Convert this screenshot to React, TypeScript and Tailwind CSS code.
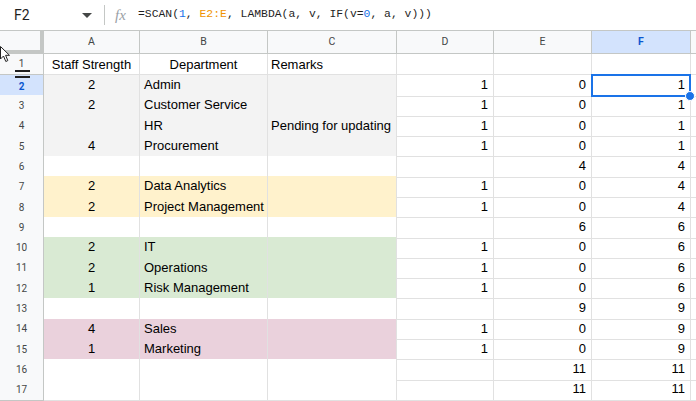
import React from "react";

type Fill = "none" | "gray" | "yellow" | "green" | "pink";

const fills: Record<Fill, string> = {
  none: "bg-white",
  gray: "bg-[#f3f3f3]",
  yellow: "bg-[#fff2cc]",
  green: "bg-[#d9ead3]",
  pink: "bg-[#ead1dc]",
};

const rows: { a: string; b: string; c: string; d: string; e: string; f: string; fill: Fill }[] = [
  { a: "Staff Strength", b: "Department", c: "Remarks", d: "", e: "", f: "", fill: "none" },
  { a: "2", b: "Admin", c: "", d: "1", e: "0", f: "1", fill: "gray" },
  { a: "2", b: "Customer Service", c: "", d: "1", e: "0", f: "1", fill: "gray" },
  { a: "", b: "HR", c: "Pending for updating", d: "1", e: "0", f: "1", fill: "gray" },
  { a: "4", b: "Procurement", c: "", d: "1", e: "0", f: "1", fill: "gray" },
  { a: "", b: "", c: "", d: "", e: "4", f: "4", fill: "none" },
  { a: "2", b: "Data Analytics", c: "", d: "1", e: "0", f: "4", fill: "yellow" },
  { a: "2", b: "Project Management", c: "", d: "1", e: "0", f: "4", fill: "yellow" },
  { a: "", b: "", c: "", d: "", e: "6", f: "6", fill: "none" },
  { a: "2", b: "IT", c: "", d: "1", e: "0", f: "6", fill: "green" },
  { a: "2", b: "Operations", c: "", d: "1", e: "0", f: "6", fill: "green" },
  { a: "1", b: "Risk Management", c: "", d: "1", e: "0", f: "6", fill: "green" },
  { a: "", b: "", c: "", d: "", e: "9", f: "9", fill: "none" },
  { a: "4", b: "Sales", c: "", d: "1", e: "0", f: "9", fill: "pink" },
  { a: "1", b: "Marketing", c: "", d: "1", e: "0", f: "9", fill: "pink" },
  { a: "", b: "", c: "", d: "", e: "11", f: "11", fill: "none" },
  { a: "", b: "", c: "", d: "", e: "11", f: "11", fill: "none" },
];

const cols = "grid grid-cols-[44px_96px_128px_129px_97px_98px_99px_5px]";

const FormulaBar = () => (
  <div className="flex items-center h-[31px] bg-white border-b border-[#c4c7c5] font-['Roboto','Liberation_Sans',sans-serif]">
    <div className="w-[104px] flex items-center justify-between pl-[14px] pr-[12px] text-[14px] text-[#1f1f1f]">
      <span>F2</span>
      <span className="w-0 h-0 border-l-[5px] border-r-[5px] border-t-[5px] border-l-transparent border-r-transparent border-t-[#444746]" />
    </div>
    <div className="w-px h-[20px] bg-[#c4c7c5]" />
    <span className="ml-[10px] w-[23px] text-[15px] italic text-[#9aa0a6] font-['Liberation_Serif',serif]">fx</span>
    <span className="text-[11.4px] text-[#1f1f1f] font-['Liberation_Mono',monospace] whitespace-pre">
      =SCAN(<span className="text-[#1a73e8]">1</span>, <span className="text-[#f09300]">E2:E</span>, LAMBDA(a, v, IF(v=<span className="text-[#1a73e8]">0</span>, a, v)))
    </span>
  </div>
);

const ColHeader = () => (
  <div className={`${cols} h-[23px] text-[10.5px] text-[#444746] font-['Roboto','Liberation_Sans',sans-serif]`}>
    <div className="bg-[#f8f9fa] border-r-[4px] border-b-[4px] border-[#c4c7c5]" />
    {["A", "B", "C", "D", "E"].map((l) => (
      <div key={l} className="bg-[#f8f9fa] border-r border-b border-[#c4c7c5] flex items-center justify-center">
        {l}
      </div>
    ))}
    <div className="bg-[#d3e3fd] border-r border-b border-[#c4c7c5] flex items-center justify-center font-bold text-[#0b57d0]">
      F
    </div>
    <div className="bg-[#f8f9fa] border-b border-[#c4c7c5]" />
  </div>
);

const App = () => {
  return (
    <div className="relative w-[696px] h-[401px] overflow-hidden bg-white">
      <FormulaBar />
      <ColHeader />
      <div className="font-['Liberation_Sans',Arial,sans-serif] text-[13px] text-black">
        {rows.map((r, i) => {
          const n = i + 1;
          const sel = n === 2;
          const fill = fills[r.fill];
          const head = i === 0;
          const pb = head ? "pb-0" : "pb-[1px]";
          return (
            <div key={n} className={`${cols} ${head ? "h-[21px]" : "h-[20.3px]"}`}>
              <div
                className={`relative border-r border-b border-[#c4c7c5] flex items-center justify-center text-[10px] font-['Roboto','Liberation_Sans',sans-serif] ${
                  sel ? "bg-[#d3e3fd] text-[#0b57d0] font-bold" : "bg-[#f8f9fa] text-[#444746]"
                }`}
              >
                <span className={n === 1 ? "-mt-[2px]" : n === 2 ? "mt-[3px]" : ""}>{n}</span>
                {n === 1 && <span className="absolute left-[15px] bottom-[2px] w-[15px] h-[2px] bg-[#1f1f1f]" />}
                {n === 2 && <span className="absolute left-[15px] top-[1px] w-[15px] h-[2px] bg-[#1f1f1f]" />}
              </div>
              <div className={`${fill} border-r border-b border-[#e1e1e1] flex items-end ${pb} justify-center`}>{r.a}</div>
              <div className={`${fill} border-r border-b border-[#e1e1e1] flex items-end ${pb} px-[4px] whitespace-nowrap`}>
                {head ? <span className="w-full text-center">{r.b}</span> : r.b}
              </div>
              <div className={`${fill} border-r border-b border-[#e1e1e1] flex items-end ${pb} px-[3px] whitespace-nowrap`}>{r.c}</div>
              <div className={`border-r border-b border-[#e1e1e1] flex items-end ${pb} justify-end px-[5px]`}>{r.d}</div>
              <div className={`border-r border-b border-[#e1e1e1] flex items-end ${pb} justify-end px-[5px]`}>{r.e}</div>
              <div className={`${sel ? "relative z-20" : ""} border-r border-b border-[#e1e1e1] flex items-end ${pb} justify-end px-[5px]`}>
                {r.f}
                {sel && (
                  <>
                    <span className="absolute -left-px -top-px -right-px -bottom-px border-2 border-[#1a73e8]" />
                    <span className="absolute -right-[5px] -bottom-[5px] w-[10px] h-[10px] rounded-full bg-[#1a73e8] border border-white" />
                  </>
                )}
              </div>
              <div className="border-b border-[#e1e1e1]" />
            </div>
          );
        })}
      </div>
      <svg className="absolute left-0 top-[46px]" width="10" height="17" viewBox="0 0 10 17">
        <path d="M0.5 0.5 L0.5 13 L3.5 10 L5.8 15.5 L7.8 14.6 L5.6 9.3 L9.5 9.3 Z" fill="white" stroke="#222" strokeWidth="1" />
      </svg>
    </div>
  );
};

export default App;
